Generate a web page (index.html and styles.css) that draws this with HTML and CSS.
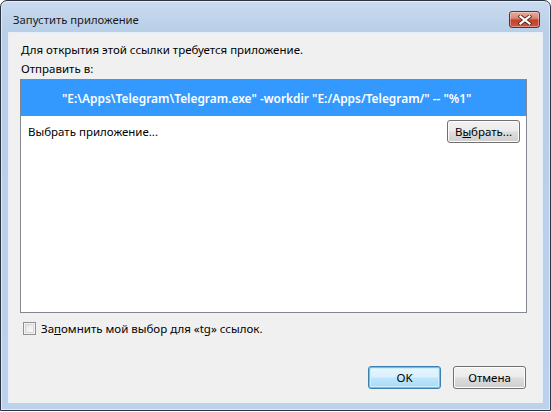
FILE: index.html
```html
<!DOCTYPE html>
<html lang="ru">
<head>
<meta charset="utf-8">
<title>Запустить приложение</title>
<link rel="stylesheet" href="styles.css">
</head>
<body>
<div class="window">
  <div class="titlebar">
    <span class="title">Запустить приложение</span>
    <button class="close" aria-label="Закрыть">
      <svg width="14" height="10" viewBox="0 0 14 10">
        <path d="M2.5 1.5 L11.5 8.5 M11.5 1.5 L2.5 8.5" stroke="#5a2a20" stroke-width="4" stroke-linecap="square"/>
        <path d="M2.5 1.5 L11.5 8.5 M11.5 1.5 L2.5 8.5" stroke="#ffffff" stroke-width="2.2" stroke-linecap="square"/>
      </svg>
    </button>
  </div>
  <div class="client">
    <div class="line first">Для открытия этой ссылки требуется приложение.</div>
    <div class="line">Отправить в:</div>
    <div class="listbox">
      <div class="item selected">"E:\Apps\Telegram\Telegram.exe" -workdir "E:/Apps/Telegram/" -- "%1"</div>
      <div class="item choose">
        <span>Выбрать приложение...</span>
        <button class="btn small">В<u>ы</u>брать...</button>
      </div>
    </div>
    <label class="remember">
      <span class="checkbox"></span>
      <span>За<u>п</u>омнить мой выбор для «tg» ссылок.</span>
    </label>
    <div class="actions">
      <button class="btn default">OK</button>
      <button class="btn">Отмена</button>
    </div>
  </div>
</div>
</body>
</html>
```

FILE: styles.css
```css
html, body {
  margin: 0;
  padding: 0;
  background: #ffffff;
}

body {
  font-family: "Noto Sans", "Open Sans", sans-serif;
  font-size: 11.5px;
  color: #000;
}

.window {
  box-sizing: border-box;
  width: 551px;
  height: 411px;
  border: 1px solid #2b3440;
  border-radius: 7px 7px 0 0;
  background: linear-gradient(180deg, #c9dbef 0px, #b9cfe8 30px, #bcd2ec 100%);
  box-shadow: inset 0 0 0 1px rgba(255,255,255,0.55);
  padding: 0 7px 7px 7px;
  display: flex;
  flex-direction: column;
}

.titlebar {
  height: 31px;
  box-sizing: border-box;
  padding-top: 6px;
  display: flex;
  align-items: center;
  justify-content: space-between;
}

.title {
  font-size: 11.3px;
  color: #1a1a1a;
  margin-left: 5px;
}

.close {
  width: 31px;
  height: 17px;
  margin-right: 3px;
  padding: 0;
  border: 1px solid #6b2e26;
  border-radius: 3px;
  background: linear-gradient(180deg, #e9a99a 0%, #d88a78 40%, #c5402b 55%, #c95a46 100%);
  box-shadow: inset 0 0 0 1px rgba(255,255,255,0.35);
  display: flex;
  align-items: center;
  justify-content: center;
}

.client {
  flex: 1;
  box-sizing: border-box;
  background: #f0f0f0;
  border: 1px solid #e6eef7;
  border-bottom: 0;
  padding: 7px 16px 0 11px;
  display: flex;
  flex-direction: column;
}

.line {
  line-height: 19px;
  margin-left: 1px;
  color: #000;
}

.listbox {
  box-sizing: border-box;
  width: 507px;
  height: 234px;
  margin-top: 1px;
  background: #ffffff;
  border: 1px solid #828790;
  display: flex;
  flex-direction: column;
}

.item.selected {
  height: 36px;
  background: #3399ff;
  color: #ffffff;
  font-weight: 600;
  display: flex;
  align-items: center;
  padding-left: 41px;
  font-size: 11.9px;
}

.item.choose {
  height: 30px;
  display: flex;
  align-items: center;
  justify-content: space-between;
  padding: 0 6px 0 7px;
}

.btn {
  box-sizing: border-box;
  width: 73px;
  height: 23px;
  padding: 0;
  font-family: inherit;
  font-size: 11.5px;
  color: #000;
  border: 1px solid #707070;
  border-radius: 3px;
  background: linear-gradient(180deg, #f2f2f2 0%, #ebebeb 48%, #dddddd 52%, #cfcfcf 100%);
  box-shadow: inset 0 0 0 1px #fcfcfc;
}

.btn.default {
  border-color: #3c7fb1;
  box-shadow: inset 0 0 0 1px #48d0f5, inset 0 0 0 2px #cfeefc;
  background: linear-gradient(180deg, #eaf6fd 0%, #d9f0fc 48%, #bee6fd 52%, #a7d9f5 100%);
}

.btn u, .remember u {
  text-decoration: underline;
  text-underline-offset: 1px;
}

.remember {
  display: flex;
  align-items: center;
  margin-top: 8px;
  margin-left: 3px;
  height: 14px;
}

.checkbox {
  box-sizing: border-box;
  width: 13px;
  height: 13px;
  border: 1px solid #8e8f8f;
  background: linear-gradient(135deg, #dcdcdc 0%, #f4f4f4 60%, #ffffff 100%);
  box-shadow: inset 0 0 0 1px #f4f4f4, inset 0 0 0 2px #d6d6d6;
  margin-right: 5px;
}

.actions {
  display: flex;
  justify-content: flex-end;
  gap: 12px;
  margin-top: 31px;
}
```
